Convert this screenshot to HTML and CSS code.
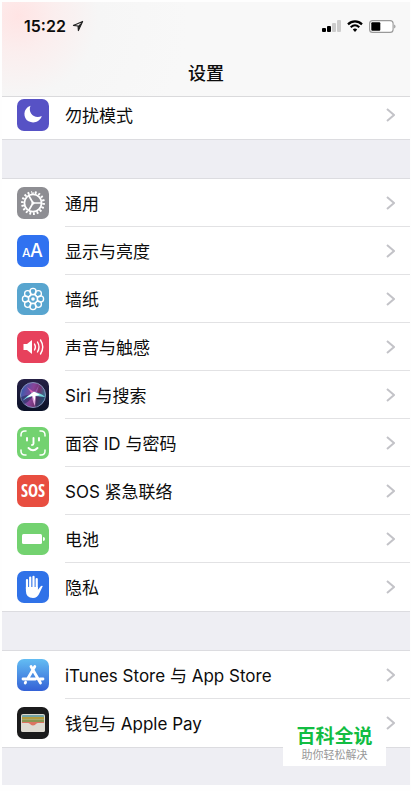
FILE: index.html
```html
<!DOCTYPE html>
<html lang="zh-CN">

<head>
  <meta charset="utf-8">
  <meta name="viewport" content="width=device-width, initial-scale=1">
  <title>设置</title>
  <link rel="stylesheet" href="styles.css">
</head>

<body>
  <header class="header">
    <div class="status">
      <div class="status-left">
        <span class="time">15:22</span>
        <svg width="12" height="12" viewBox="0 0 12 12">
          <path d="M1.4 5.4L10.6 1.4L6.4 10.6L6 6Z" fill="none" stroke="#222" stroke-width="1.1" stroke-linejoin="round" />
          <path d="M6 6L10.6 1.4L6.4 10.6Z" fill="#222" />
        </svg>
      </div>
      <div class="status-right">
        <svg width="19" height="12" viewBox="0 0 19 12">
          <rect x="0" y="8" width="4" height="4" rx="1" fill="#000" />
          <rect x="5" y="6" width="4" height="6" rx="1" fill="#000" />
          <rect x="10" y="3" width="4" height="9" rx="1" fill="#ccc" />
          <rect x="15" y="0" width="4" height="12" rx="1" fill="#ccc" />
        </svg>
        <svg width="16" height="12" viewBox="0 0 16 12">
          <path d="M1 4.4C5 0.4 11 0.4 15 4.4" fill="none" stroke="#000" stroke-width="2.2" />
          <path d="M3.7 7.3C6.3 4.8 9.7 4.8 12.3 7.3" fill="none" stroke="#000" stroke-width="2" />
          <path d="M5.8 9.5C7 8.3 9 8.3 10.2 9.5L8 12Z" fill="#000" />
        </svg>
        <svg width="27" height="13" viewBox="0 0 27 13">
          <rect x="0.6" y="0.6" width="23.5" height="11.8" rx="3" fill="#fff" stroke="#999" stroke-width="1.1" />
          <rect x="2.3" y="2.3" width="9" height="8.4" rx="1" fill="#000" />
          <path d="M25.3 4.5C26.8 5 26.8 8 25.3 8.5Z" fill="#888" />
        </svg>
      </div>
    </div>
    <h1 class="title">设置</h1>
  </header>

  <main class="settings">
    <ul class="group group-first">
      <li>
        <a class="row" href="#dnd">
          <svg class="icon" viewBox="0 0 32 32">
            <rect width="32" height="32" rx="7" fill="#5752c5" />
            <path d="M13.5 6.8C5.5 9.5 6 19.5 11.5 22.3C17 25 23 22.5 24.8 17C17.5 20.5 10.5 14 13.5 6.8Z" fill="#fff" />
          </svg>
          <span class="label">勿扰模式</span>
          <svg class="chevron" viewBox="0 0 9 14"><path d="M1 1L8 7L1 13" /></svg>
        </a>
      </li>
    </ul>

    <ul class="group">
      <li>
        <a class="row" href="#general">
          <svg class="icon" viewBox="0 0 32 32">
            <rect width="32" height="32" rx="7" fill="#8e8e93" />
            <g fill="none" stroke="#fff">
              <circle cx="16" cy="16" r="8.6" stroke-width="1.8" />
              <circle cx="16" cy="16" r="10.6" stroke-width="2.6" pathLength="72" stroke-dasharray="2 2" />
              <path d="M16 16H24M16 16L12 9M16 16L12 23" stroke-width="1.7" />
            </g>
            <circle cx="16" cy="16" r="1.6" fill="#fff" />
          </svg>
          <span class="label">通用</span>
          <svg class="chevron" viewBox="0 0 9 14"><path d="M1 1L8 7L1 13" /></svg>
        </a>
      </li>
      <li>
        <a class="row" href="#display">
          <svg class="icon" viewBox="0 0 32 32">
            <rect width="32" height="32" rx="7" fill="#3072f0" />
            <text class="icon-text" x="5" y="22" font-size="12">A</text>
            <text class="icon-text" x="13" y="22" font-size="18">A</text>
          </svg>
          <span class="label">显示与亮度</span>
          <svg class="chevron" viewBox="0 0 9 14"><path d="M1 1L8 7L1 13" /></svg>
        </a>
      </li>
      <li>
        <a class="row" href="#wallpaper">
          <svg class="icon" viewBox="0 0 32 32">
            <rect width="32" height="32" rx="7" fill="#58a5cf" />
            <g fill="none" stroke="#fff" stroke-width="1.3">
              <circle cx="16" cy="8.5" r="3.1" />
              <circle cx="21.3" cy="10.7" r="3.1" />
              <circle cx="23.5" cy="16" r="3.1" />
              <circle cx="21.3" cy="21.3" r="3.1" />
              <circle cx="16" cy="23.5" r="3.1" />
              <circle cx="10.7" cy="21.3" r="3.1" />
              <circle cx="8.5" cy="16" r="3.1" />
              <circle cx="10.7" cy="10.7" r="3.1" />
              <circle cx="16" cy="16" r="4.5" />
            </g>
            <circle cx="16" cy="16" r="1.8" fill="#fff" />
          </svg>
          <span class="label">墙纸</span>
          <svg class="chevron" viewBox="0 0 9 14"><path d="M1 1L8 7L1 13" /></svg>
        </a>
      </li>
      <li>
        <a class="row" href="#sounds">
          <svg class="icon" viewBox="0 0 32 32">
            <rect width="32" height="32" rx="7" fill="#e7415c" />
            <path d="M6.5 13H10L15 9V23L10 19H6.5Z" fill="#fff" />
            <g fill="none" stroke="#fff" stroke-width="1.4" stroke-linecap="round">
              <path d="M17.5 13Q19.3 16 17.5 19" />
              <path d="M20.5 11Q23.5 16 20.5 21" />
              <path d="M23.5 9Q28 16 23.5 23" />
            </g>
          </svg>
          <span class="label">声音与触感</span>
          <svg class="chevron" viewBox="0 0 9 14"><path d="M1 1L8 7L1 13" /></svg>
        </a>
      </li>
      <li>
        <a class="row" href="#siri">
          <svg class="icon" viewBox="0 0 32 32">
            <defs>
              <linearGradient id="siri-bg" x1="0" y1="0" x2="0" y2="1">
                <stop offset="0" stop-color="#252045" />
                <stop offset="1" stop-color="#0b1228" />
              </linearGradient>
              <linearGradient id="siri-ball" x1="0" y1="0.3" x2="1" y2="0.6">
                <stop offset="0" stop-color="#315fb0" />
                <stop offset="0.45" stop-color="#8a4399" />
                <stop offset="0.7" stop-color="#70346f" />
                <stop offset="1" stop-color="#267d95" />
              </linearGradient>
            </defs>
            <rect width="32" height="32" rx="7" fill="url(#siri-bg)" />
            <circle cx="16" cy="16" r="12.5" fill="url(#siri-ball)" stroke="#8792bd" />
            <path d="M4 18Q11 15 17 16Q22 15 28 18Q26 25 19 28Q17 23 16 17Q12 23 7 25Q4 22 4 18Z" fill="#1a274f" opacity="0.5" />
            <path d="M16 16L10 8L17.5 13.5Z" fill="#d762b1" />
            <path d="M16 16L22 6L19 16Z" fill="#9857ac" />
            <path d="M5 22Q11 16 17 13L18 16Q11 18 5 22Z" fill="#73e1e7" />
            <path d="M15 14L19 15L18 27Q15 22 15 14Z" fill="#e3a9df" />
            <path d="M14 14Q22 12 28 18Q21 17 16 17Z" fill="#75d8dc" />
            <path d="M10 18L17 12.5L23 16L18 17L18 22L15.5 17Z" fill="#fff" />
          </svg>
          <span class="label">Siri 与搜索</span>
          <svg class="chevron" viewBox="0 0 9 14"><path d="M1 1L8 7L1 13" /></svg>
        </a>
      </li>
      <li>
        <a class="row" href="#faceid">
          <svg class="icon" viewBox="0 0 32 32">
            <rect width="32" height="32" rx="7" fill="#73d270" />
            <g fill="none" stroke="#fff" stroke-width="1.5" stroke-linecap="round">
              <path d="M4 9V8Q4 4 8 4H9M23 4H24Q28 4 28 8V9M28 23V24Q28 28 24 28H23M9 28H8Q4 28 4 24V23" />
              <path d="M10 11V13.5M22 11V13.5M16.5 11V16.5Q16.5 18 15 18M11.5 21Q16 25.5 20.5 21" stroke-width="1.9" />
            </g>
          </svg>
          <span class="label">面容 ID 与密码</span>
          <svg class="chevron" viewBox="0 0 9 14"><path d="M1 1L8 7L1 13" /></svg>
        </a>
      </li>
      <li>
        <a class="row" href="#sos">
          <span class="icon icon-sos">SOS</span>
          <span class="label">SOS 紧急联络</span>
          <svg class="chevron" viewBox="0 0 9 14"><path d="M1 1L8 7L1 13" /></svg>
        </a>
      </li>
      <li>
        <a class="row" href="#battery">
          <svg class="icon" viewBox="0 0 32 32">
            <rect width="32" height="32" rx="7" fill="#73d270" />
            <rect x="5" y="11" width="20" height="10" rx="1.5" fill="#fff" />
            <path d="M26 14Q28 14 28 16T26 18Z" fill="#fff" />
          </svg>
          <span class="label">电池</span>
          <svg class="chevron" viewBox="0 0 9 14"><path d="M1 1L8 7L1 13" /></svg>
        </a>
      </li>
      <li>
        <a class="row" href="#privacy">
          <svg class="icon" viewBox="0 0 32 32">
            <rect width="32" height="32" rx="7" fill="#3072e8" />
            <g fill="none" stroke="#fff" stroke-width="2.2" stroke-linecap="round">
              <path d="M10 18V9M13.2 17V6.5M16.5 17V5.8M19.7 18V8" />
            </g>
            <path d="M8.9 16H20.8V19L23.5 15.5Q24.5 14.3 25.8 15L22.5 22Q20.5 27 16 27Q9 27 8.9 20Z" fill="#fff" />
          </svg>
          <span class="label">隐私</span>
          <svg class="chevron" viewBox="0 0 9 14"><path d="M1 1L8 7L1 13" /></svg>
        </a>
      </li>
    </ul>

    <ul class="group">
      <li>
        <a class="row" href="#store">
          <svg class="icon" viewBox="0 0 32 32">
            <defs>
              <linearGradient id="store-bg" x1="0" y1="0" x2="0" y2="1">
                <stop offset="0" stop-color="#63bdf3" />
                <stop offset="1" stop-color="#3461d6" />
              </linearGradient>
            </defs>
            <rect width="32" height="32" rx="7" fill="url(#store-bg)" />
            <g fill="none" stroke="#fff" stroke-width="2.8" stroke-linecap="round">
              <path d="M14 7.5L23.5 24M17.8 7.5L10.5 20M8.6 23.3L8.2 24M6 20H18.5M23 20H26" />
            </g>
          </svg>
          <span class="label">iTunes Store 与 App Store</span>
          <svg class="chevron" viewBox="0 0 9 14"><path d="M1 1L8 7L1 13" /></svg>
        </a>
      </li>
      <li>
        <a class="row" href="#wallet">
          <svg class="icon" viewBox="0 0 32 32">
            <rect width="32" height="32" rx="7" fill="#1b1b1c" />
            <rect x="4" y="7" width="24" height="18" rx="2" fill="#dad7cc" />
            <path d="M5 9Q5 8 6 8H26Q27 8 27 9V10H5Z" fill="#72a3a6" />
            <rect x="5" y="10" width="22" height="2.5" fill="#b49c3e" />
            <rect x="5" y="12.5" width="22" height="2.5" fill="#899652" />
            <path d="M5 15H27V17H20Q16 21 12 17H5Z" fill="#dc7461" />
            <path d="M4 16H11Q12 16 13 17Q16 20 19 17Q20 16 21 16H28V23Q28 25 26 25H6Q4 25 4 23Z" fill="#dedbd2" />
          </svg>
          <span class="label">钱包与 Apple Pay</span>
          <svg class="chevron" viewBox="0 0 9 14"><path d="M1 1L8 7L1 13" /></svg>
        </a>
      </li>
    </ul>
  </main>

  <div class="watermark">
    <strong>百科全说</strong>
    <span>助你轻松解决</span>
  </div>
</body>

</html>
```
FILE: styles.css
```css
* {
  box-sizing: border-box;
}

body {
  margin: 0;
  padding: 2px 1px 0 2px;
  position: relative;
  background-color: #fefefe;
  color: #0c0c0c;
  font-family: Inter, "Noto Sans CJK SC", sans-serif;
}

.header {
  position: relative;
  z-index: 1;
  height: 95px;
  padding-top: 12px;
  background: radial-gradient(circle at 16px 14px, #ffe4e4 0, #fbeeee 36px, #f6f6f6 80px, #f8f8f8 170px);
  border-bottom: 1px solid #dadadc;
}

.status {
  display: flex;
  justify-content: space-between;
  align-items: center;
  height: 24px;
  padding: 0 14px 0 22px;
}

.status-left,
.status-right {
  display: flex;
  align-items: center;
  gap: 6px;
}

.time {
  font-size: 16px;
  font-weight: 600;
}

.title {
  margin: 22px 0 0;
  font-size: 18px;
  line-height: 28px;
  font-weight: 500;
  text-align: center;
}

.settings {
  display: flex;
  flex-direction: column;
  gap: 38px;
  padding-bottom: 37px;
  background-color: #eeeef3;
}

.group {
  margin: 0;
  padding: 0;
  list-style: none;
  background-color: #fff;
  border-top: 1px solid #dcdce0;
  border-bottom: 1px solid #dcdce0;
}

/* scrolled partly under the header */
.group-first {
  margin-top: -7px;
}

.row {
  display: flex;
  align-items: center;
  height: 48px;
  padding: 0 15px;
  gap: 16px;
  color: inherit;
  text-decoration: none;
  background: linear-gradient(#e2e2e4, #e2e2e4) 63px 100% / 100% 1px no-repeat;
}

li:last-child .row {
  background: none;
}

.icon {
  flex: none;
  width: 32px;
  height: 32px;
}

.icon-text {
  fill: #fff;
  font-family: Inter, sans-serif;
  font-weight: 500;
}

.icon-sos {
  border-radius: 7px;
  background-color: #e84e40;
  color: #fff;
  font-family: "Liberation Sans Narrow", "Open Sans Condensed", Roboto, sans-serif;
  font-size: 17px;
  font-weight: 700;
  line-height: 32px;
  text-align: center;
}

.label {
  flex: 1;
  padding-top: 2px;
  font-size: 17px;
  line-height: 24px;
}

.chevron {
  flex: none;
  width: 9px;
  height: 14px;
  fill: none;
  stroke: #c3c3c8;
  stroke-width: 2;
}

.watermark {
  position: absolute;
  right: 25px;
  bottom: 19px;
  z-index: 2;
  display: flex;
  flex-direction: column;
  align-items: center;
  width: 103px;
  height: 40px;
  background-color: #fff;
}

.watermark strong {
  color: #12bd42;
  font-size: 19px;
  line-height: 22px;
}

.watermark span {
  color: #999;
  font-size: 11px;
  line-height: 14px;
}
```
